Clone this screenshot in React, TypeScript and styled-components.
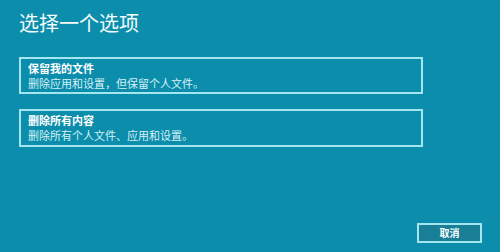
import React from "react";
import styled, { createGlobalStyle } from "styled-components";

const Global = createGlobalStyle`
  html, body { margin: 0; padding: 0; background: #0b8dab; }
  #root { width: 500px; height: 252px; }
`;

const Page = styled.div`
  box-sizing: border-box;
  width: 500px;
  height: 252px;
  padding: 10px 18px 9px 19px;
  display: flex;
  flex-direction: column;
  background: #0b8dab;
  font-family: "Microsoft YaHei", "Noto Sans CJK SC", "Noto Sans", sans-serif;
  color: #ffffff;
`;

const Title = styled.h1`
  margin: 0 0 21px 0;
  font-size: 20px;
  line-height: 26px;
  font-weight: 400;
  color: #f4fbfd;
`;

const Options = styled.div`
  display: flex;
  flex-direction: column;
  gap: 15px;
`;

const Option = styled.div<{ $h: number }>`
  box-sizing: border-box;
  width: 404px;
  height: ${(p) => p.$h}px;
  border: 2px solid #a4e6ef;
  padding: 2px 7px 0 7px;
  display: flex;
  flex-direction: column;
`;

const OptionTitle = styled.div`
  font-size: 11px;
  line-height: 15px;
  font-weight: 700;
  color: #ffffff;
`;

const OptionDesc = styled.div`
  font-size: 11px;
  line-height: 15px;
  font-weight: 400;
  color: #d6f1f6;
`;

const Footer = styled.div`
  margin-top: auto;
  display: flex;
  justify-content: flex-end;
`;

const Button = styled.button`
  box-sizing: border-box;
  width: 65px;
  height: 20px;
  padding: 0;
  border: 2px solid #a4e6ef;
  background: #197f96;
  color: #ffffff;
  font-family: inherit;
  font-size: 10px;
  font-weight: 700;
  line-height: 16px;
`;

export default function App() {
  return (
    <>
      <Global />
      <Page>
        <Title>选择一个选项</Title>
        <Options>
          <Option $h={37}>
            <OptionTitle>保留我的文件</OptionTitle>
            <OptionDesc>删除应用和设置，但保留个人文件。</OptionDesc>
          </Option>
          <Option $h={38}>
            <OptionTitle>删除所有内容</OptionTitle>
            <OptionDesc>删除所有个人文件、应用和设置。</OptionDesc>
          </Option>
        </Options>
        <Footer>
          <Button>取消</Button>
        </Footer>
      </Page>
    </>
  );
}
